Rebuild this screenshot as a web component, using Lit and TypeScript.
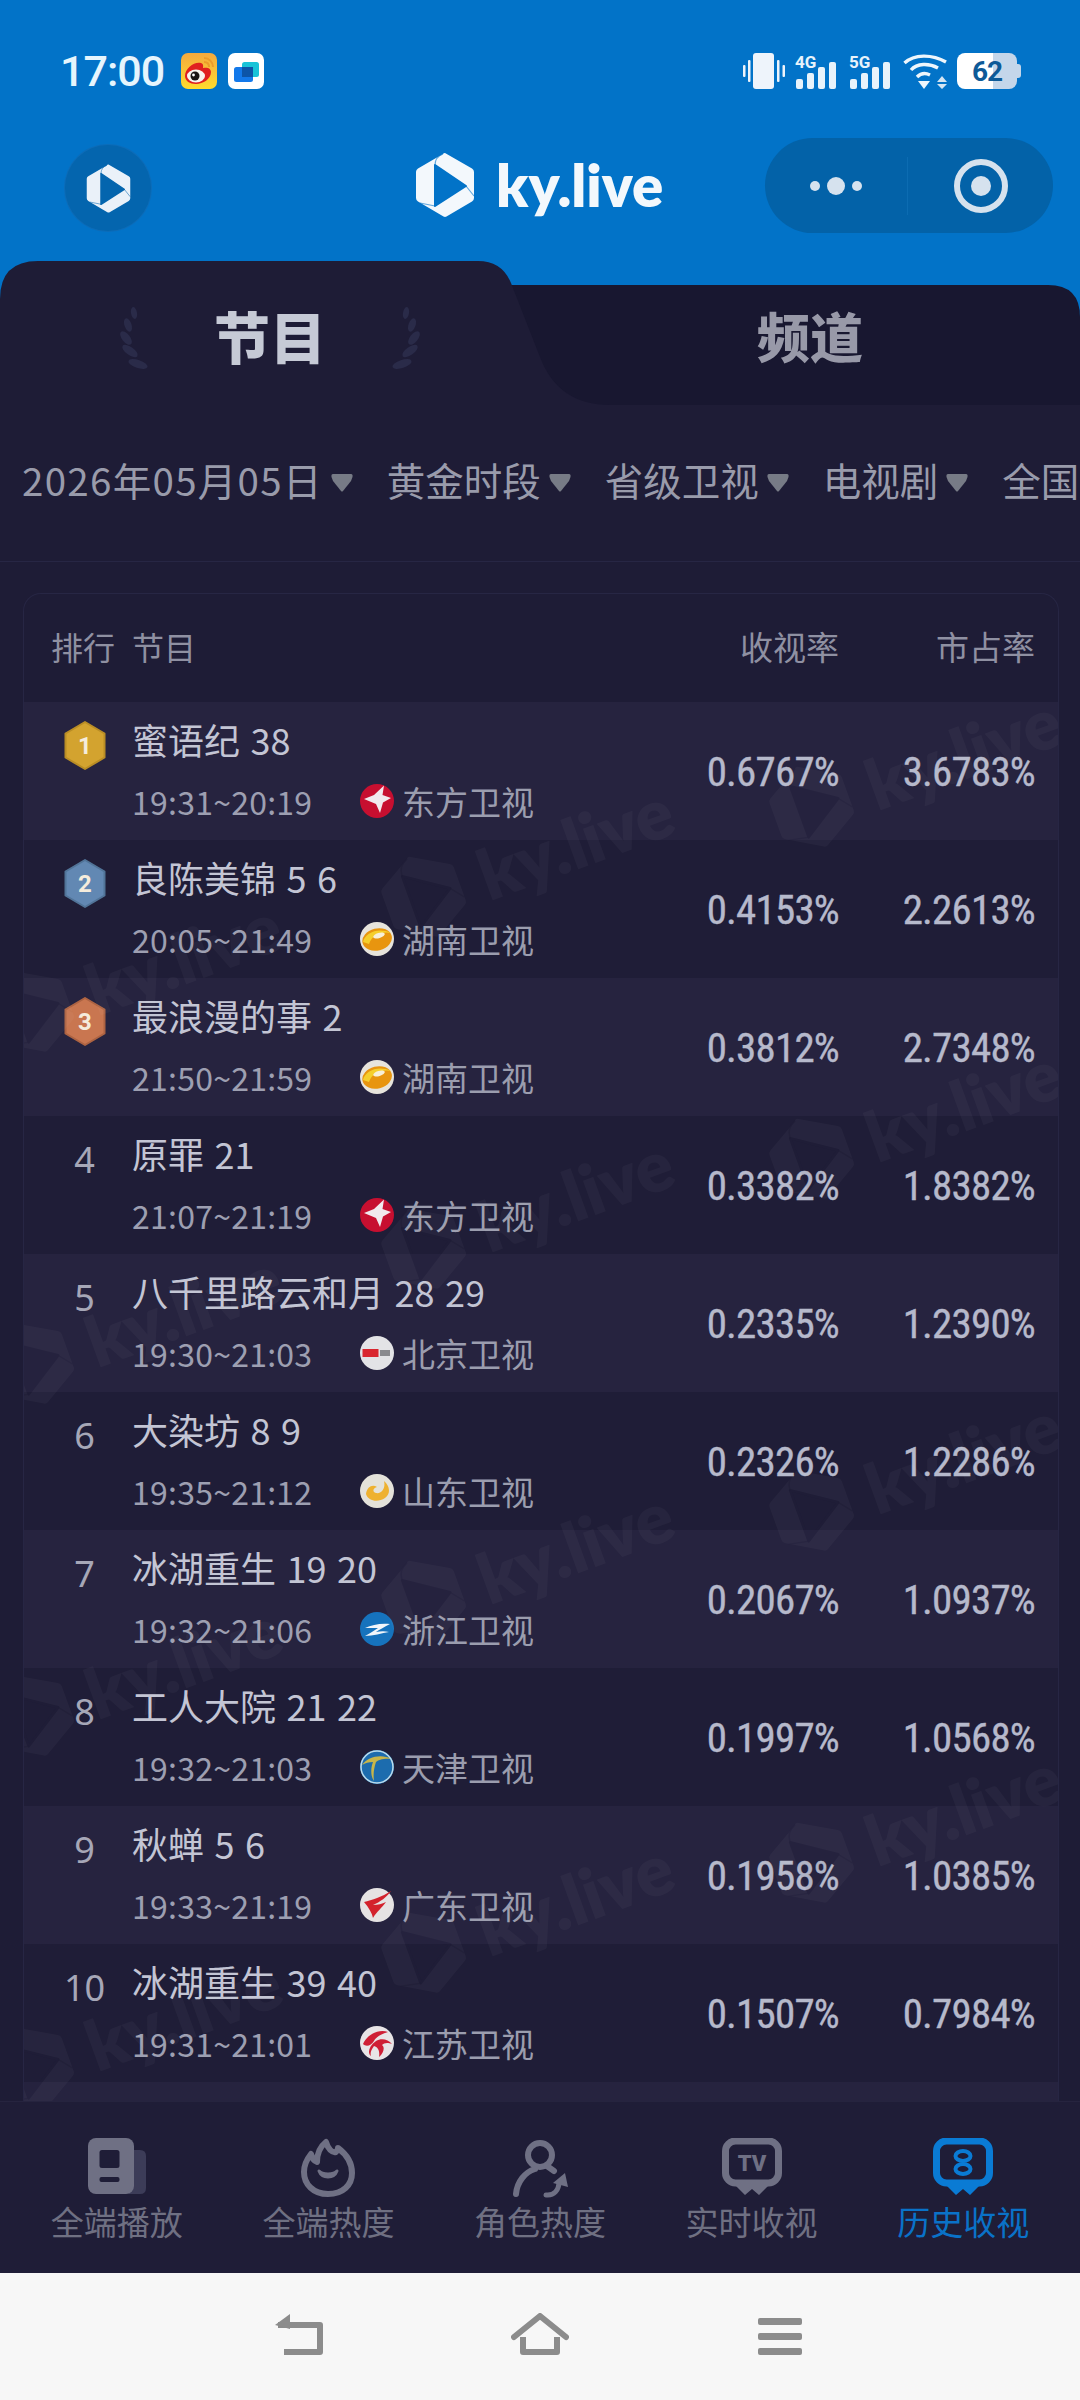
import { LitElement, html, css } from "lit";
import { customElement } from "lit/decorators.js";

const hexLogo = (fill: string, cut: string, cls = "") => html`<svg class=${cls} viewBox="0 0 60 68">
  <path d="M30 2 L57 17.5 Q59 18.6 59 21 V47 Q59 49.4 57 50.5 L31.5 65.6 Q30 66.4 28.5 65.6 L3 50.5 Q1 49.4 1 47 V21 Q1 18.6 3 17.5 L27 3.6 Q29 1.6 30 2Z" fill=${fill}/>
  <path d="M20 14 L51 35 L20 55Z" fill=${cut} stroke=${cut} stroke-width="2" stroke-linejoin="round"/>
  <path d="M20 14 Q20 6 28 3 M20 55 L5 52 M51 35 L59 45" fill="none" stroke=${cut} stroke-width="1.2" opacity=".6"/>
</svg>`;

const channelLogos: Record<string, unknown> = {
  dongfang: html`<svg class="ch" viewBox="0 0 34 34"><circle cx="17" cy="17" r="17" fill="#c70f30"/><path d="M24 1.5 L22.5 11 L31 14 L23 18.5 L20 29 L16 20 L4 15 L14 11Z" fill="#f1e9ee"/></svg>`,
  hunan: html`<svg class="ch" viewBox="0 0 34 34"><circle cx="17" cy="17" r="17" fill="#e7e4dc"/><ellipse cx="17" cy="17.5" rx="15" ry="11" transform="rotate(-14 17 17)" fill="#e8950f"/><path d="M3 20 C5 11 18 5 31 11 C24 9 12 12 9 22Z" fill="#f5cf2c"/><ellipse cx="19" cy="13.5" rx="6" ry="2.6" transform="rotate(-16 19 13.5)" fill="#f7efd8"/></svg>`,
  beijing: html`<svg class="ch" viewBox="0 0 34 34"><circle cx="17" cy="17" r="17" fill="#e3e3e6"/><rect x="2.5" y="13" width="16" height="8" fill="#d9262f"/><rect x="20" y="14" width="10" height="6" fill="#8a8a8e"/></svg>`,
  shandong: html`<svg class="ch" viewBox="0 0 34 34"><circle cx="17" cy="17" r="17" fill="#e4e2da"/><path d="M6 20 C7 12 13 10 17 13 C13 14 12 18 16 19 C21 20 26 15 24 7 C30 12 31 20 25 24 C18 29 8 27 6 20Z" fill="#eeb130"/></svg>`,
  zhejiang: html`<svg class="ch" viewBox="0 0 34 34"><circle cx="17" cy="17" r="17" fill="#1673bd"/><path d="M5 16 C12 13 20 11 30 12 C24 15 19 18 16 20 C21 19 25 19 29 20 C22 21 13 24 5 24 C10 21 14 19 18 16 C14 16 9 16 5 16Z" fill="#f2f6fa"/></svg>`,
  tianjin: html`<svg class="ch" viewBox="0 0 34 34"><circle cx="17" cy="17" r="17" fill="#1c6cae"/><path d="M2 15 C8 6 22 4 32 9 C24 8 18 10 16 12 C14 18 13 24 14 31 C10 25 11 17 13 12 C9 12 5 13 2 15Z" fill="#c8b64a"/><circle cx="17" cy="17" r="16" fill="none" stroke="#bcdcec" stroke-width="1.5"/></svg>`,
  guangdong: html`<svg class="ch" viewBox="0 0 34 34"><circle cx="17" cy="17" r="17" fill="#e6e3e3"/><path d="M4 14 C12 12 22 9 31 3 C27 9 20 14 13 17 C18 17 22 16 26 14 C22 20 17 23 13 30 C12 25 9 20 4 14Z" fill="#d3222c"/></svg>`,
  jiangsu: html`<svg class="ch" viewBox="0 0 34 34"><circle cx="17" cy="17" r="17" fill="#e8e4e6"/><path d="M3 18 C8 7 20 3 28 6 C21 8 16 11 14 15 C11 20 6 21 3 18Z M16 15 C21 12 28 13 32 18 C27 16 24 17 22 19 C25 21 24 27 19 31 C20 25 18 21 14 20 C11 24 10 27 11 30 C7 27 9 20 16 15Z" fill="#cf1f35"/></svg>`,
};

interface Row { rank: number; title: string; time: string; logo: string; channel: string; rate: string; share: string; }
const rows: Row[] = [
  { rank: 1, title: "蜜语纪 38", time: "19:31~20:19", logo: "dongfang", channel: "东方卫视", rate: "0.6767%", share: "3.6783%" },
  { rank: 2, title: "良陈美锦 5 6", time: "20:05~21:49", logo: "hunan", channel: "湖南卫视", rate: "0.4153%", share: "2.2613%" },
  { rank: 3, title: "最浪漫的事 2", time: "21:50~21:59", logo: "hunan", channel: "湖南卫视", rate: "0.3812%", share: "2.7348%" },
  { rank: 4, title: "原罪 21", time: "21:07~21:19", logo: "dongfang", channel: "东方卫视", rate: "0.3382%", share: "1.8382%" },
  { rank: 5, title: "八千里路云和月 28 29", time: "19:30~21:03", logo: "beijing", channel: "北京卫视", rate: "0.2335%", share: "1.2390%" },
  { rank: 6, title: "大染坊 8 9", time: "19:35~21:12", logo: "shandong", channel: "山东卫视", rate: "0.2326%", share: "1.2286%" },
  { rank: 7, title: "冰湖重生 19 20", time: "19:32~21:06", logo: "zhejiang", channel: "浙江卫视", rate: "0.2067%", share: "1.0937%" },
  { rank: 8, title: "工人大院 21 22", time: "19:32~21:03", logo: "tianjin", channel: "天津卫视", rate: "0.1997%", share: "1.0568%" },
  { rank: 9, title: "秋蝉 5 6", time: "19:33~21:19", logo: "guangdong", channel: "广东卫视", rate: "0.1958%", share: "1.0385%" },
  { rank: 10, title: "冰湖重生 39 40", time: "19:31~21:01", logo: "jiangsu", channel: "江苏卫视", rate: "0.1507%", share: "0.7984%" },
];

const medal: Record<number, [string, string]> = {
  1: ["#d3a32f", "#b98d25"],
  2: ["#6288b3", "#517498"],
  3: ["#c97650", "#ad6342"],
};

const filters = ["2026年05月05日", "黄金时段", "省级卫视", "电视剧", "全国"];

const marks: [number, number][] = [];
for (let k = 0; k < 4; k++) {
  marks.push([527, 157 + 352 * k]);
  marks.push([915, 67 + 352 * k]);
  marks.push([135, 272 + 352 * k]);
}

const tabIcons = [
  html`<svg viewBox="0 0 60 60"><path d="M40 12 H53 Q59 12 59 18 V50 Q59 56 53 56 H42Z" fill="#3c3c58"/><rect x="1" y="0" width="46" height="56" rx="8" fill="#6f7084"/><rect x="12.5" y="12" width="20" height="18" rx="2.5" fill="#1f1d37"/><rect x="12.5" y="39" width="20" height="5" rx="2" fill="#1f1d37"/></svg>`,
  html`<svg viewBox="0 0 60 60" fill="none" stroke="#6f7084" stroke-width="6" stroke-linejoin="round" stroke-linecap="round"><path d="M30 56 C15 56 6 46 6 34 C6 27 9 21 13 16 C14 20 16 23 19 24 C19 15 23 8 28 4 C30 11 34 15 38 14 C39 13 40 11 40 10 C48 16 54 25 54 35 C54 47 45 56 30 56Z"/><path d="M21 33 C24 41 36 41 39 33 C36 37 24 37 21 33Z" fill="#6f7084" stroke-width="3"/></svg>`,
  html`<svg viewBox="0 0 60 60" fill="none" stroke="#6f7084" stroke-width="6" stroke-linecap="round"><circle cx="30" cy="17" r="12"/><path d="M6 56 C7 44 15 34 25 31 M37 28 L44 33"/><path d="M36 57 C44 58 49 52 49 44" stroke-width="5"/><path d="M43 45 L55 35 L58 49Z" fill="#6f7084" stroke="none"/></svg>`,
  html`<svg viewBox="0 0 60 60"><rect x="3.5" y="3" width="53" height="42" rx="10" fill="none" stroke="#6f7084" stroke-width="7"/><path d="M13 47 L23 57 L30 51 L37 57 L47 47Z" fill="#6f7084"/><text x="30" y="33" text-anchor="middle" class="tv">TV</text></svg>`,
  html`<svg viewBox="0 0 60 60" fill="none" stroke="#0a7bd4"><rect x="3.5" y="3" width="53" height="42" rx="10" stroke-width="7"/><path d="M13 47 L23 57 L30 51 L37 57 L47 47Z" fill="#0a7bd4" stroke="none"/><ellipse cx="30" cy="18" rx="7.5" ry="5" stroke-width="4"/><ellipse cx="30" cy="31" rx="7.5" ry="5" stroke-width="4"/></svg>`,
];
const tabLabels = ["全端播放", "全端热度", "角色热度", "实时收视", "历史收视"];

const signal = (label: string) => html`<svg class="sig" viewBox="0 0 42 36">
  <text x="0" y="15" class="sigt">${label}</text>
  <rect x="1" y="26" width="7" height="10" rx="2" fill="#e8f3fb"/><rect x="12" y="20" width="7" height="16" rx="2" fill="#e8f3fb"/><rect x="23" y="14" width="7" height="22" rx="2" fill="#e8f3fb"/><rect x="34" y="9" width="7" height="27" rx="2" fill="#e8f3fb"/>
</svg>`;

@customElement("app-root")
export class AppRoot extends LitElement {
  static styles = css`
    :host { display: block; width: 1080px; height: 2400px; font-family: "Noto Sans CJK SC", "Noto Sans", sans-serif; }
    .page { width: 1080px; height: 2400px; display: flex; flex-direction: column; background: #1e1c36; overflow: hidden; }
    .top { background: #0273c8; }
    .status { height: 138px; box-sizing: border-box; padding: 53px 59px 0 60px; display: flex; justify-content: space-between; align-items: flex-start; }
    .status-l, .status-r { display: flex; align-items: center; height: 36px; }
    .time { font-family: Roboto, sans-serif; font-size: 43px; font-weight: 500; color: #e6f5fd; width: 121px; letter-spacing: -1px; line-height: 36px; }
    .app-ic { width: 36px; height: 36px; margin-right: 11px; display: block; }
    .vib { width: 42px; height: 36px; margin-right: 10px; }
    .sig { width: 42px; height: 36px; margin-right: 12px; overflow: visible; }
    .sigt { font: 700 17px Roboto, sans-serif; fill: #e8f3fb; }
    .wifi { width: 45px; height: 36px; margin-right: 9px; margin-left: 0; }
    .batt { width: 64px; height: 36px; display: flex; position: relative; }
    .batt-body { width: 60px; height: 36px; border-radius: 8px; background: linear-gradient(90deg, #fff 0 60%, #c4d6ea 60%); display: flex; align-items: center; justify-content: center; font: 700 28px Roboto, sans-serif; color: #0d5a98; letter-spacing: -1px; }
    .batt-nub { width: 4px; height: 14px; margin-top: 11px; background: #c4d6ea; border-radius: 0 3px 3px 0; }

    .header { height: 123px; display: flex; align-items: flex-start; padding: 0 27px 0 65px; position: relative; }
    .circle { width: 86px; height: 86px; margin-top: 7px; border-radius: 50%; background: #0465ae; box-shadow: 0 0 0 1px #0d6cb8; display: flex; align-items: center; justify-content: center; }
    .circle-logo { width: 45px; height: 51px; }
    .brand { position: absolute; left: 415px; top: 13px; display: flex; align-items: center; height: 68px; }
    .brand-logo { width: 60px; height: 68px; }
    .brand-text { margin-left: 21px; font: 800 58px Lato, "Noto Sans", sans-serif; color: #f3f8fc; line-height: 68px; }
    .pill { margin-left: auto; width: 288px; height: 95px; border-radius: 48px; background: #0362a8; display: flex; align-items: center; }
    .pill-a { width: 142px; display: flex; justify-content: center; align-items: center; gap: 7px; padding-left: 0; }
    .pill-a i { display: block; width: 10px; height: 10px; border-radius: 50%; background: #d6e2ee; }
    .pill-a i.b { width: 18px; height: 18px; }
    .pill-sep { width: 1px; height: 58px; background: #0c6cb2; }
    .pill-b { flex: 1; display: flex; justify-content: center; }
    .target { width: 54px; height: 54px; box-sizing: border-box; border: 6px solid #d6e2ee; border-radius: 50%; display: flex; align-items: center; justify-content: center; }
    .target i { display: block; width: 20px; height: 20px; border-radius: 50%; background: #d6e2ee; }

    .tabs { height: 144px; position: relative; background: #0273c8; display: flex; }
    .tab-bg { position: absolute; left: 0; top: 0; width: 1080px; height: 144px; }
    .tab { position: relative; width: 540px; height: 104px; display: flex; align-items: center; justify-content: center; font-size: 56px; font-weight: 900; line-height: 1; margin-top: 22px; }
    .tab.on { color: #c6cad6; }
    .tab.off { color: #9899a8; font-size: 53px; }
    .laurel { width: 30px; height: 64px; margin: 8px 0 0; }
    .tab-name { width: 242px; text-align: center; }

    .filters { height: 157px; box-sizing: border-box; padding: 54px 0 0 22px; display: flex; gap: 34px; border-bottom: 1px solid #272644; overflow: hidden; flex: none; }
    .filter { display: flex; flex: none; align-items: center; height: 40px; font-size: 38.5px; color: #999bab; white-space: nowrap; gap: 8px; }
    .filter.date { letter-spacing: 1.3px; }
    .filter svg { width: 22px; height: 19px; margin-top: 6px; }

    .list { flex: 1; min-height: 0; padding: 31px 21px 0 23px; overflow: hidden; position: relative; }
    .card { border: 1px solid #272644; border-bottom: 0; border-radius: 18px 18px 0 0; height: 100%; position: relative; }
    .thead { height: 108px; display: grid; grid-template-columns: 108px 1fr 135px 196px; padding-right: 23px; align-items: center; font-size: 32px; color: #8f90a2; line-height: 1; box-sizing: border-box; padding-bottom: 4px; }
    .thead .rank { padding-left: 27px; white-space: nowrap; }
    .thead .r { text-align: right; font-size: 33px; }
    .rows { position: absolute; left: 0; right: 0; top: 108px; bottom: 0; overflow: hidden; }
    .row { height: 138px; display: grid; grid-template-columns: 108px 1fr 135px 196px; padding-right: 23px; position: relative; box-sizing: border-box; }
    .row.a { background: #26233f; }
    .row.b { background: #1f1d37; }
    .rk { padding: 19px 0 0 13px; display: flex; justify-content: center; font: 400 36px/50px "Noto Sans", sans-serif; color: #a6a7b7; align-items: flex-start; }
    .hex { width: 42px; height: 49px; }
    .hex text { font: 700 24px Roboto, sans-serif; fill: #f5ecdc; text-anchor: middle; }
    .mid { padding-top: 12px; min-width: 0; }
    .title { font-size: 36px; line-height: 50px; color: #c3c5d4; white-space: nowrap; word-spacing: 2.5px; }
    .sub { margin-top: 12px; display: flex; align-items: center; height: 50px; }
    .t { width: 228px; font-size: 32px; color: #9d9fb1; letter-spacing: .25px; }
    .ch { width: 34px; height: 34px; flex: none; }
    .cn { margin-left: 8px; font-size: 33px; color: #9b9dae; }
    .num { align-self: center; text-align: right; font: 400 41px/1 "Liberation Sans Narrow", "Roboto Condensed", Roboto, sans-serif; color: #b6b9cb; padding-top: 3px; letter-spacing: -.8px; -webkit-text-stroke: .35px #b6b9cb; }
    .wm-layer { position: absolute; inset: 0; pointer-events: none; overflow: hidden; }
    .wm { position: absolute; display: flex; align-items: center; gap: 18px; transform: translate(-50%, -50%) rotate(-20deg); opacity: .03; }
    .wm-logo { width: 84px; height: 90px; flex: none; }
    .wm span { font: 800 70px/90px Lato, sans-serif; color: #fff; white-space: nowrap; }

    .tabbar { height: 172px; flex: none; background: #1f1d37; border-top: 1px solid #26243f; box-sizing: border-box; padding: 36px 11px 0; display: flex; position: relative; }
    .item { flex: 1; display: flex; flex-direction: column; align-items: center; }
    .item svg { width: 60px; height: 60px; display: block; }
    .tv { font: 900 22px Roboto, sans-serif; fill: #6f7084; }
    .item span { margin-top: 1px; font-size: 33px; line-height: 44px; color: #6f7082; }
    .item.on span { color: #0a72c8; }
    .nav { height: 127px; flex: none; background: #f7f7f7; display: flex; padding: 40px 0 0 274px; box-sizing: border-box; }
    .nav svg { display: block; height: 42px; }
    .nav .back { width: 50px; }
    .nav .home { width: 58px; margin-left: 187px; }
    .nav .menu { width: 44px; margin-left: 189px; }
  `;

  render() {
    return html`<div class="page">
      <div class="top">
        <div class="status">
          <div class="status-l">
            <span class="time">17:00</span>
            <svg class="app-ic" viewBox="0 0 36 36">
              <defs><linearGradient id="wb" x1="0" y1="0" x2="0" y2="1"><stop offset="0" stop-color="#f3a93e"/><stop offset="1" stop-color="#ffdc2e"/></linearGradient></defs>
              <rect width="36" height="36" rx="7" fill="url(#wb)"/>
              <path d="M4 23 C4 15 14 8 20 10 C23 11 22 14 22 15 C26 14 30 15 30 19 C30 26 22 31 15 31 C9 31 4 28 4 23Z" fill="#e0201f"/>
              <ellipse cx="15" cy="23" rx="9" ry="6.5" fill="#f8f4ee"/><circle cx="14" cy="23" r="4.5" fill="#1a1413"/><circle cx="12.5" cy="22" r="1.4" fill="#fff"/>
              <path d="M23 5 C28 5 32 9 32 14 M23 9 C26 9 28 11 28 14" fill="none" stroke="#ec9b2a" stroke-width="2"/>
            </svg>
            <svg class="app-ic" viewBox="0 0 36 36">
              <rect width="36" height="36" rx="7" fill="#fff"/>
              <rect x="14" y="9" width="17" height="15" rx="2.5" fill="#18c3d8"/>
              <rect x="6" y="14" width="19" height="15" rx="2.5" fill="#1379ea"/>
              <rect x="14" y="14" width="11" height="10" fill="#0c55a8"/>
            </svg>
          </div>
          <div class="status-r">
            <svg class="vib" viewBox="0 0 42 36"><rect x="10" y="0" width="21" height="36" rx="3" fill="#eef4fb"/><rect x="0" y="12" width="2.5" height="12" rx="1" fill="#eef4fb"/><rect x="5" y="7" width="2.5" height="22" rx="1" fill="#eef4fb"/><rect x="34" y="7" width="2.5" height="22" rx="1" fill="#eef4fb"/><rect x="39.5" y="12" width="2.5" height="12" rx="1" fill="#eef4fb"/></svg>
            ${signal("4G")}${signal("5G")}
            <svg class="wifi" viewBox="0 0 45 36" fill="none" stroke="#eef6fc" stroke-width="3.4"><path d="M1.5 10 C11 1 29 1 43 9"/><path d="M8 17 C14 10 26 10 35 15"/><path d="M14 24 C18 20 23 20 27 22"/><path d="M15 28 H27 L21 36Z" fill="#eef6fc" stroke="none"/><path d="M39 23 L44 29 H34Z M34 31 H44 L39 36Z" fill="#d4e5f3" stroke="none"/></svg>
            <div class="batt"><div class="batt-body">62</div><div class="batt-nub"></div></div>
          </div>
        </div>
        <div class="header">
          <div class="circle">${hexLogo("#eaf1f9", "#0465ae", "circle-logo")}</div>
          <div class="brand">${hexLogo("#f3f8fc", "#0273c8", "brand-logo")}<span class="brand-text">ky.live</span></div>
          <div class="pill">
            <div class="pill-a"><i></i><i class="b"></i><i></i></div>
            <div class="pill-sep"></div>
            <div class="pill-b"><div class="target"><i></i></div></div>
          </div>
        </div>
      </div>

      <div class="tabs">
        <svg class="tab-bg" viewBox="0 0 1080 144">
          <path d="M500 24 H1048 Q1080 24 1080 56 V144 H500Z" fill="#181730"/>
          <path d="M0 144 V38 Q0 0 38 0 H478 Q502 0 511 22 L540 96 Q558 144 610 144Z" fill="#1e1c36"/>
        </svg>
        <div class="tab on">
          <svg class="laurel" viewBox="0 0 30 64" fill="#2a2b49"><ellipse cx="15" cy="6" rx="3" ry="6" transform="rotate(-10 15 6)"/><ellipse cx="9" cy="18" rx="3.5" ry="7" transform="rotate(-20 9 18)"/><ellipse cx="7" cy="31" rx="4" ry="8" transform="rotate(-38 7 31)"/><ellipse cx="11" cy="44" rx="4" ry="9" transform="rotate(-55 11 44)"/><ellipse cx="19" cy="57" rx="4" ry="10" transform="rotate(-72 19 57)"/></svg>
          <span class="tab-name">节目</span>
          <svg class="laurel" viewBox="0 0 30 64" fill="#2a2b49"><ellipse cx="15" cy="6" rx="3" ry="6" transform="rotate(10 15 6)"/><ellipse cx="21" cy="18" rx="3.5" ry="7" transform="rotate(20 21 18)"/><ellipse cx="23" cy="31" rx="4" ry="8" transform="rotate(38 23 31)"/><ellipse cx="19" cy="44" rx="4" ry="9" transform="rotate(55 19 44)"/><ellipse cx="11" cy="57" rx="4" ry="10" transform="rotate(72 11 57)"/></svg>
        </div>
        <div class="tab off"><span>频道</span></div>
      </div>

      <div class="filters">
        ${filters.map((f, i) => html`<div class="filter ${i === 0 ? "date" : ""}">${f}${i < 4 ? html`<svg viewBox="0 0 22 19"><path d="M2 1 H20 Q22 1 21.5 4 L20 8 L12 18 Q11 19 10 18 L2 8 L.5 4 Q0 1 2 1Z" fill="#777b86"/></svg>` : ""}</div>`)}
      </div>

      <div class="list">
        <div class="card">
          <div class="thead">
            <div class="rank">排行</div>
            <div>节目</div>
            <div class="r">收视率</div>
            <div class="r">市占率</div>
          </div>
          <div class="rows">
            ${rows.map((r, i) => html`<div class="row ${i % 2 ? "b" : "a"}">
              <div class="rk">${medal[r.rank]
                ? html`<svg class="hex" viewBox="0 0 42 49"><path d="M21 1 L40.5 12.5 V36.5 L21 48 L1.5 36.5 V12.5Z" fill=${medal[r.rank][0]} stroke=${medal[r.rank][1]} stroke-width="2" stroke-linejoin="round"/><text x="21" y="33">${r.rank}</text></svg>`
                : r.rank}</div>
              <div class="mid">
                <div class="title">${r.title}</div>
                <div class="sub"><span class="t">${r.time}</span>${channelLogos[r.logo]}<span class="cn">${r.channel}</span></div>
              </div>
              <div class="num">${r.rate}</div>
              <div class="num">${r.share}</div>
            </div>`)}
            <div class="row a"></div>
            <div class="wm-layer">
              ${marks.map(([x, y]) => html`<div class="wm" style="left:${x - 24}px;top:${y}px">${hexLogo("#fff", "#1f1d37", "wm-logo")}<span>ky.live</span></div>`)}
            </div>
          </div>
        </div>
      </div>

      <div class="tabbar">
        ${tabLabels.map((l, i) => html`<div class="item ${i === 4 ? "on" : ""}">${tabIcons[i]}<span>${l}</span></div>`)}
      </div>
      <div class="nav">
        <svg class="back" viewBox="0 0 50 42" fill="none" stroke="#8c8c8c" stroke-width="6" stroke-linejoin="round"><path d="M4 12 H46 V39 H10"/><path d="M16 1 L1 12 L16 16Z" fill="#8c8c8c" stroke="none"/></svg>
        <svg class="home" viewBox="0 0 58 42" fill="none" stroke="#8c8c8c" stroke-width="6" stroke-linejoin="round" stroke-linecap="round"><path d="M3 24 L29 3 L55 24"/><path d="M12 24 V39 H46 V24" stroke-linecap="butt"/></svg>
        <svg class="menu" viewBox="0 0 44 42" fill="#8c8c8c"><rect y="5" width="44" height="7" rx="2"/><rect y="20" width="44" height="7" rx="2"/><rect y="35" width="44" height="7" rx="2"/></svg>
      </div>
    </div>`;
  }
}
